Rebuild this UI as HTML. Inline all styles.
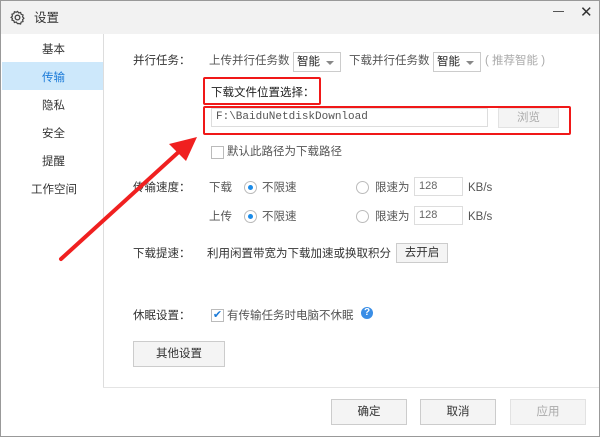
<html><head><style>
body{margin:0;width:600px;height:437px;overflow:hidden;font-family:"Liberation Sans","Noto Sans CJK SC",sans-serif;font-size:11.5px;line-height:14px;color:#333;background:#fff}
.win{position:absolute;left:0;top:0;width:598px;height:435px;border:1px solid #999;background:#fff}
.title{position:absolute;left:0;top:0;width:598px;height:33px;background:#f2f2f2}
.a{position:absolute;white-space:nowrap}
.g{color:#555}
.sel{position:absolute;border:1px solid #ccc;background:#fff;height:18px;line-height:18px;padding-left:3px;color:#222}
.sel:after{content:"";position:absolute;right:6px;top:8px;border:4px solid transparent;border-top:4px solid #888;border-bottom:0}
.btn{position:absolute;border:1px solid #ccc;background:#f4f4f4;text-align:center;color:#333}
.radio{position:absolute;width:11px;height:11px;border:1px solid #bbb;border-radius:50%;background:#fff}
.radio.on:after{content:"";position:absolute;left:3px;top:3px;width:5px;height:5px;border-radius:50%;background:#1a8be8}
.inp{position:absolute;border:1px solid #ddd;background:#fff;height:17px;line-height:17px;color:#666;padding-left:4px;font-size:11px}
.red{position:absolute;border:2px solid #f01818;border-radius:2px}
</style></head><body>
<div class="win">
<div class="title"></div>
<svg class="a" style="left:9px;top:9px" width="15" height="15" viewBox="0 0 16 16"><circle cx="8" cy="8" r="2.5" fill="none" stroke="#444" stroke-width="1.4"/><path d="M8 1.5l1.3 1.6 2-.5.6 2 2 .7-.5 2 1.4 1.5-1.4 1.5.5 2-2 .6-.6 2-2-.5L8 14.5l-1.3-1.6-2 .5-.6-2-2-.6.5-2L1.2 8l1.4-1.5-.5-2 2-.6.6-2 2 .5z" fill="none" stroke="#444" stroke-width="1.3"/></svg>
<div class="a" style="left:33px;top:9px;font-size:12.5px;line-height:16px;color:#333">设置</div>
<div class="a" style="left:552px;top:10px;width:11px;height:1px;background:#555"></div>
<div class="a" style="left:579px;top:3px;font-size:15px;line-height:18px;color:#333">✕</div>
<div class="a" style="left:102px;top:33px;width:1px;height:354px;background:#ddd"></div>
<div class="a" style="left:102px;top:386px;width:496px;height:1px;background:#e4e4e4"></div>
<div class="a" style="left:1px;top:61px;width:101px;height:28px;background:#cde8fb"></div>
<div class="a" style="left:41px;top:42px">基本</div>
<div class="a" style="left:41px;top:70px;color:#1a7ad8">传输</div>
<div class="a" style="left:41px;top:98px">隐私</div>
<div class="a" style="left:41px;top:126px">安全</div>
<div class="a" style="left:41px;top:154px">提醒</div>
<div class="a" style="left:30px;top:182px">工作空间</div>

<div class="a" style="left:132px;top:53px">并行任务：</div>
<div class="a g" style="left:208px;top:53px">上传并行任务数</div>
<div class="sel" style="left:292px;top:51px;width:43px">智能</div>
<div class="a g" style="left:348px;top:53px">下载并行任务数</div>
<div class="sel" style="left:432px;top:51px;width:43px">智能</div>
<div class="a" style="left:484px;top:53px;color:#aaa">( 推荐智能 )</div>

<div class="red" style="left:202px;top:76px;width:114px;height:24px"></div>
<div class="a" style="left:210px;top:85px;color:#222">下载文件位置选择：</div>
<div class="red" style="left:202px;top:105px;width:364px;height:25px"></div>
<div class="inp" style="left:210px;top:107px;width:271px;font-family:'Liberation Mono',monospace;color:#555">F:\BaiduNetdiskDownload</div>
<div class="btn" style="left:497px;top:107px;width:59px;height:18px;line-height:18px;color:#aaa;border-color:#e2e2e2">浏览</div>
<div class="a" style="left:210px;top:145px;width:11px;height:11px;border:1px solid #bbb;background:#fff"></div>
<div class="a g" style="left:226px;top:144px">默认此路径为下载路径</div>

<div class="a" style="left:132px;top:180px">传输速度：</div>
<div class="a g" style="left:208px;top:180px">下载</div>
<div class="radio on" style="left:243px;top:180px"></div>
<div class="a g" style="left:261px;top:180px">不限速</div>
<div class="radio" style="left:355px;top:180px"></div>
<div class="a g" style="left:374px;top:180px">限速为</div>
<div class="inp" style="left:413px;top:176px;width:43px">128</div>
<div class="a g" style="left:467px;top:180px">KB/s</div>
<div class="a g" style="left:208px;top:209px">上传</div>
<div class="radio on" style="left:243px;top:209px"></div>
<div class="a g" style="left:261px;top:209px">不限速</div>
<div class="radio" style="left:355px;top:209px"></div>
<div class="a g" style="left:374px;top:209px">限速为</div>
<div class="inp" style="left:413px;top:205px;width:43px">128</div>
<div class="a g" style="left:467px;top:209px">KB/s</div>

<div class="a" style="left:132px;top:246px">下载提速：</div>
<div class="a" style="left:206px;top:246px">利用闲置带宽为下载加速或换取积分</div>
<div class="btn" style="left:395px;top:242px;width:50px;height:18px;line-height:18px">去开启</div>

<div class="a" style="left:132px;top:308px">休眠设置：</div>
<div class="a" style="left:210px;top:308px;width:11px;height:11px;border:1px solid #bbb;background:#fff;color:#1a7ad8;font-size:11px;line-height:11px;text-align:center">✔</div>
<div class="a g" style="left:226px;top:308px">有传输任务时电脑不休眠</div>
<div class="a" style="left:360px;top:306px;width:12px;height:12px;border-radius:50%;background:#3a8ee6;color:#fff;font-size:10px;line-height:12px;text-align:center;font-weight:bold">?</div>
<div class="btn" style="left:132px;top:340px;width:90px;height:24px;line-height:24px">其他设置</div>

<div class="btn" style="left:330px;top:398px;width:74px;height:24px;line-height:24px">确定</div>
<div class="btn" style="left:419px;top:398px;width:74px;height:24px;line-height:24px">取消</div>
<div class="btn" style="left:509px;top:398px;width:74px;height:24px;line-height:24px;color:#aaa;border-color:#e2e2e2">应用</div>

<svg class="a" style="left:0;top:0" width="600" height="437"><path d="M60 258L182 147" stroke="#f02020" stroke-width="4" stroke-linecap="round"/><path d="M196 136L168 143L185 160Z" fill="#f02020"/></svg>
</div>
</body></html>
